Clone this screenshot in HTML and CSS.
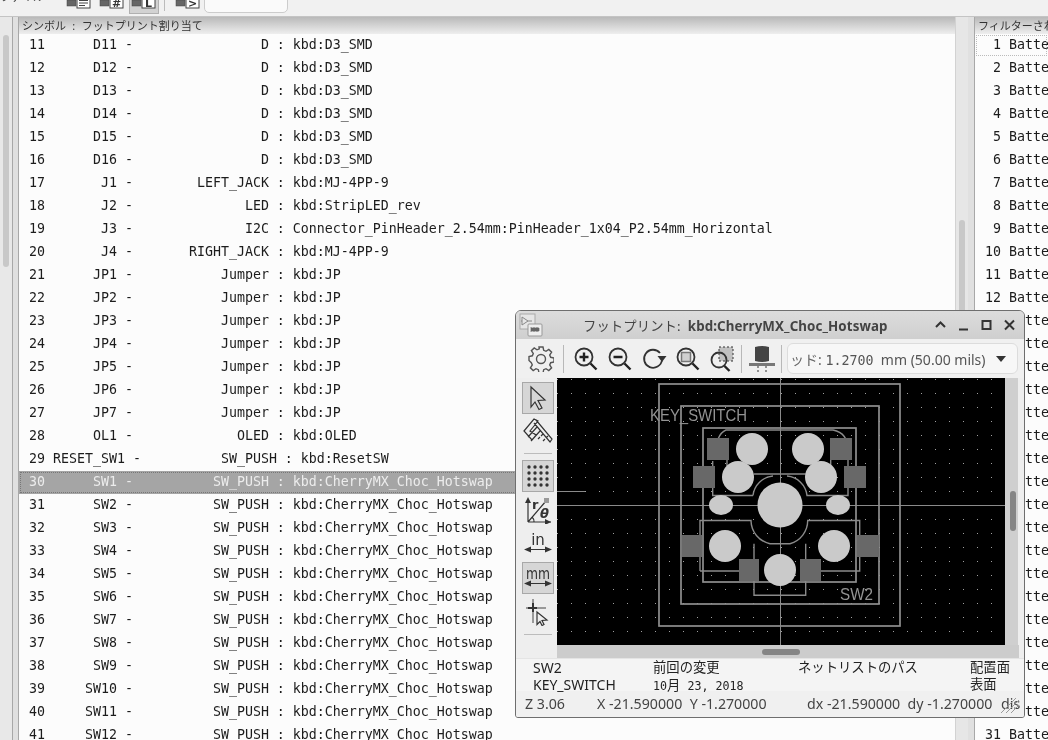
FILE: index.html
```html
<!DOCTYPE html>
<html lang="ja">
<head>
<meta charset="utf-8">
<title>フットプリント割り当て</title>
<link rel="stylesheet" href="styles.css">
</head>
<body>
<div class="app">
  <header class="topbar">
    <span class="toplabel">ファイル</span>
    <span class="topicon"><svg width="26" height="13" viewBox="0 0 26 13"><rect class="chip" x="2" y="3" width="9" height="6"/><rect class="box" x="12" y="1" width="13" height="10"/><path class="boxline" d="M14 3.500h9M14 6h9M14 8.500h6"/></svg></span>
    <span class="topicon"><svg width="26" height="13" viewBox="0 0 26 13"><rect class="chip" x="2" y="3" width="9" height="6"/><rect class="box" x="12" y="1" width="13" height="10"/><text class="boxtext" x="18.500" y="10">#</text></svg></span>
    <span class="topicon topicon-on"><svg width="26" height="13" viewBox="0 0 26 13"><rect class="chip" x="2" y="3" width="9" height="6"/><rect class="box" x="12" y="1" width="13" height="10"/><text class="boxtext" x="18.500" y="10">L</text></svg></span>
    <span class="topsep"></span>
    <span class="topicon"><svg width="26" height="13" viewBox="0 0 26 13"><rect class="chip" x="2" y="3" width="9" height="6"/><rect class="box" x="12" y="1" width="13" height="10"/><text class="boxtext" x="18.500" y="10">&gt;</text></svg></span>
    <span class="topcombo"></span>
  </header>
  <main class="panes">
    <aside class="leftpane"><div class="vthumb"></div></aside>
    <div class="divider"></div>
    <section class="listpane">
      <div class="panehead panehead-main">シンボル : フットプリント割り当て</div>
      <div class="rows">
        <div class="row"> 11      D11 -                D : kbd:D3_SMD</div>
        <div class="row"> 12      D12 -                D : kbd:D3_SMD</div>
        <div class="row"> 13      D13 -                D : kbd:D3_SMD</div>
        <div class="row"> 14      D14 -                D : kbd:D3_SMD</div>
        <div class="row"> 15      D15 -                D : kbd:D3_SMD</div>
        <div class="row"> 16      D16 -                D : kbd:D3_SMD</div>
        <div class="row"> 17       J1 -        LEFT_JACK : kbd:MJ-4PP-9</div>
        <div class="row"> 18       J2 -              LED : kbd:StripLED_rev</div>
        <div class="row"> 19       J3 -              I2C : Connector_PinHeader_2.54mm:PinHeader_1x04_P2.54mm_Horizontal</div>
        <div class="row"> 20       J4 -       RIGHT_JACK : kbd:MJ-4PP-9</div>
        <div class="row"> 21      JP1 -           Jumper : kbd:JP</div>
        <div class="row"> 22      JP2 -           Jumper : kbd:JP</div>
        <div class="row"> 23      JP3 -           Jumper : kbd:JP</div>
        <div class="row"> 24      JP4 -           Jumper : kbd:JP</div>
        <div class="row"> 25      JP5 -           Jumper : kbd:JP</div>
        <div class="row"> 26      JP6 -           Jumper : kbd:JP</div>
        <div class="row"> 27      JP7 -           Jumper : kbd:JP</div>
        <div class="row"> 28      OL1 -             OLED : kbd:OLED</div>
        <div class="row"> 29 RESET_SW1 -          SW_PUSH : kbd:ResetSW</div>
        <div class="row row-selected"> 30      SW1 -          SW_PUSH : kbd:CherryMX_Choc_Hotswap</div>
        <div class="row"> 31      SW2 -          SW_PUSH : kbd:CherryMX_Choc_Hotswap</div>
        <div class="row"> 32      SW3 -          SW_PUSH : kbd:CherryMX_Choc_Hotswap</div>
        <div class="row"> 33      SW4 -          SW_PUSH : kbd:CherryMX_Choc_Hotswap</div>
        <div class="row"> 34      SW5 -          SW_PUSH : kbd:CherryMX_Choc_Hotswap</div>
        <div class="row"> 35      SW6 -          SW_PUSH : kbd:CherryMX_Choc_Hotswap</div>
        <div class="row"> 36      SW7 -          SW_PUSH : kbd:CherryMX_Choc_Hotswap</div>
        <div class="row"> 37      SW8 -          SW_PUSH : kbd:CherryMX_Choc_Hotswap</div>
        <div class="row"> 38      SW9 -          SW_PUSH : kbd:CherryMX_Choc_Hotswap</div>
        <div class="row"> 39     SW10 -          SW_PUSH : kbd:CherryMX_Choc_Hotswap</div>
        <div class="row"> 40     SW11 -          SW_PUSH : kbd:CherryMX_Choc_Hotswap</div>
        <div class="row"> 41     SW12 -          SW_PUSH : kbd:CherryMX_Choc_Hotswap</div>
      </div>
    </section>
    <div class="vtrack"><div class="vthumb vthumb-main"></div></div>
    <div class="divider divider-right"></div>
    <section class="filterpane">
      <div class="panehead">フィルターされたフットプリント</div>
      <div class="rows">
        <div class="row row-focus">  1 Battery</div>
        <div class="row">  2 Battery</div>
        <div class="row">  3 Battery</div>
        <div class="row">  4 Battery</div>
        <div class="row">  5 Battery</div>
        <div class="row">  6 Battery</div>
        <div class="row">  7 Battery</div>
        <div class="row">  8 Battery</div>
        <div class="row">  9 Battery</div>
        <div class="row"> 10 Battery</div>
        <div class="row"> 11 Battery</div>
        <div class="row"> 12 Battery</div>
        <div class="row"> 13 Battery</div>
        <div class="row"> 14 Battery</div>
        <div class="row"> 15 Battery</div>
        <div class="row"> 16 Battery</div>
        <div class="row"> 17 Battery</div>
        <div class="row"> 18 Battery</div>
        <div class="row"> 19 Battery</div>
        <div class="row"> 20 Battery</div>
        <div class="row"> 21 Battery</div>
        <div class="row"> 22 Battery</div>
        <div class="row"> 23 Battery</div>
        <div class="row"> 24 Battery</div>
        <div class="row"> 25 Battery</div>
        <div class="row"> 26 Battery</div>
        <div class="row"> 27 Battery</div>
        <div class="row"> 28 Battery</div>
        <div class="row"> 29 Battery</div>
        <div class="row"> 30 Battery</div>
        <div class="row"> 31 Battery</div>
      </div>
    </section>
  </main>

  <div class="window">
    <div class="titlebar">
      <svg class="appicon" width="24" height="24" viewBox="0 0 24 24"><rect class="ai-back" x="1" y="1" width="15" height="15"/><path class="ai-line" d="M3 4l6 4-6 4zM2 8h1M9 8h4"/><rect class="ai-front" x="9" y="11" width="14" height="12" rx="1"/><path class="ai-dark" d="M12 15h8v3h-8zM12 14v1M15 14v1M18 14v1M12 18v1M15 18v1M18 18v1"/></svg>
      <div class="wintitle">フットプリント:  <b>kbd:CherryMX_Choc_Hotswap</b></div>
      <div class="winbtns">
        <svg width="23" height="20" viewBox="0 0 23 20"><path class="wb" d="M7 12l4.500-4.500L16 12"/></svg>
        <svg width="23" height="20" viewBox="0 0 23 20"><path class="wb" d="M7 14.500h9"/></svg>
        <svg width="23" height="20" viewBox="0 0 23 20"><rect class="wb" x="7.500" y="6" width="8" height="8"/></svg>
        <svg width="23" height="20" viewBox="0 0 23 20"><path class="wb" d="M7 5.500l9 9M16 5.500l-9 9"/></svg>
      </div>
    </div>
    <div class="wintools">
      <span class="tool"><svg width="26" height="26" viewBox="0 0 26 26"><path class="ic-thin" d="M11 1.500h4l.7 3.300 2.300 1 2.800-1.900 2.800 2.800-1.900 2.800 1 2.300 3.300.7v4l-3.300.7-1 2.300 1.900 2.800-2.800 2.800-2.800-1.900-2.300 1-.7 3.300h-4l-.7-3.300-2.300-1-2.800 1.900-2.800-2.800 1.900-2.800-1-2.300L1 15v-4l3.300-.7 1-2.300L3.400 5.200l2.800-2.800L9 4.300l2.300-1z" transform="translate(0 -.5)"/><circle class="ic-thin" cx="13" cy="13" r="4.500"/></svg></span>
      <span class="sep"></span>
      <span class="tool"><svg width="26" height="26" viewBox="0 0 26 26"><circle class="ic" cx="11" cy="11" r="8.500"/><path class="ic-bold" d="M17.500 17.500l6 6M6.500 11h9M11 6.500v9"/></svg></span>
      <span class="tool"><svg width="26" height="26" viewBox="0 0 26 26"><circle class="ic" cx="11" cy="11" r="8.500"/><path class="ic-bold" d="M17.500 17.500l6 6M6.500 11h9"/></svg></span>
      <span class="tool"><svg width="26" height="26" viewBox="0 0 26 26"><path class="ic" d="M19 7A9 9 0 1 0 21 14"/><path class="ic-fill" d="M16.500 10h9l-4.500 6z"/></svg></span>
      <span class="tool"><svg width="26" height="26" viewBox="0 0 26 26"><circle class="ic" cx="11" cy="11" r="8.500"/><rect class="ic-frame" x="6.500" y="6.500" width="9" height="9"/><path class="ic-bold" d="M17.500 17.500l6 6"/></svg></span>
      <span class="tool"><svg width="26" height="26" viewBox="0 0 26 26"><rect class="ic-sel" x="10" y="1" width="14" height="14"/><circle class="ic" cx="10" cy="14" r="7.500"/><path class="ic-bold" d="M15.500 20l5 5"/></svg></span>
      <span class="sep sep-tight"></span>
      <span class="tool"><svg width="30" height="30" viewBox="0 0 30 30"><path class="ic-3d" d="M8 3q7-2 14 0v14q-7 2-14 0z"/><rect class="ic-3db" x="2" y="19" width="26" height="3"/><path class="ic-dash" d="M11 22v7M19 22v7"/></svg></span>
      <span class="sep sep-tight"></span>
      <div class="combo"><span class="combotext"><span class="clipkana">ッド:</span> <span class="mono">1.2700</span>  mm (50.00 mils)</span><span class="caret"></span></div>
    </div>
    <div class="winbody">
      <nav class="sidetools">
        <span class="side side-on"><svg width="24" height="26" viewBox="0 0 24 26"><path class="ic-sm" d="M5 2l14 13-7 .5 4 7.500-3 1.500-4-7.500-4 5z"/></svg></span>
        <span class="side"><svg width="30" height="28" viewBox="0 0 30 28"><path class="ic-sm" d="M1 14L11 2l4 2-8 10 6 4-4 5zM13 3l16 19-2 3L11 6M5 20l9-10M8 24l9-10M17 20l-2 2M20 17l-2 2M22 22l-2 2M25 19l-2 2"/></svg></span>
        <span class="sidesep"></span>
        <span class="side side-on"><svg width="24" height="24" viewBox="0 0 24 24"><path class="ic-dots" d="M3 3h.01M9 3h.01M15 3h.01M21 3h.01M3 9h.01M9 9h.01M15 9h.01M21 9h.01M3 15h.01M9 15h.01M15 15h.01M21 15h.01M3 21h.01M9 21h.01M15 21h.01M21 21h.01"/></svg></span>
        <span class="side side-polar"><svg width="28" height="28" viewBox="0 0 28 28"><path class="ic-sm" d="M4 26V4M4 26h23M4 26L22 5"/><path class="ic-fill" d="M4 1l3 6H1zM27 26l-6-3v6z"/><rect class="ic-gray" x="20" y="2" width="5" height="5"/><text class="polar-r" x="8" y="13">r</text><text class="polar-t" x="16" y="22">θ</text><path class="ic-sm" d="M10 26a6 6 0 0 0-2-5"/></svg></span>
        <span class="side"><svg width="28" height="26" viewBox="0 0 28 26"><text class="unit" x="14" y="15">in</text><path class="ic-sm" d="M2 19.500h24"/><path class="ic-fill" d="M0 19.500l7-3v6zM28 19.500l-7-3v6z"/></svg></span>
        <span class="side side-on side-mm"><svg width="28" height="26" viewBox="0 0 28 26"><text class="unit" x="14" y="14" textLength="24" lengthAdjust="spacingAndGlyphs">mm</text><path class="ic-sm" d="M2 18.500h24"/><path class="ic-fill" d="M0 18.500l7-3v6zM28 18.500l-7-3v6z"/></svg></span>
        <span class="side"><svg width="28" height="28" viewBox="0 0 28 28"><path class="ic-gray-l" d="M2 10h20M9 1v24"/><path class="ic-cross" d="M4 10h9M9 5v9"/><path class="ic-sm" d="M13 14l10 8-5 .5 2 4-2 1-2-4-3 3z"/></svg></span>
        <span class="sidesep sidesep-end"></span>
      </nav>
      <div class="viewcol">
        <div class="viewrow">
          <svg class="canvas" width="448" height="267" viewBox="557 377 448 267">
            <defs>
              <pattern id="griddots" x="571" y="378" width="14" height="14" patternUnits="userSpaceOnUse"><rect class="griddot" width="1" height="1"/></pattern>
            </defs>
            <rect x="557" y="377" width="448" height="267" class="bg"/>
            <rect x="557" y="377" width="448" height="267" fill="url(#griddots)"/>
            <path class="axis" d="M780.500 377V644M557 504.500H1005M557 490.500H585"/>
            <rect class="court" x="659" y="383" width="241" height="242"/>
            <rect class="court" x="681" y="405" width="198" height="198"/>
            <rect class="court" x="703" y="427" width="153" height="154"/>
            <g class="silk">
              <path d="M718 438Q721 431 726 429H833Q848 432 848 449V494.500H807A22 22 0 0 0 787 475M805.700 473H754M753 494.500A22 22 0 0 1 773 475M753 494.500H712.700V486M727 459V465M830.700 459V465M712.700 460V465"/>
              <path d="M700 570V519.500H751A24 24 0 0 0 770 542.700H790A24 24 0 0 0 807.700 519.500H859.700V570H821M739 570H700M754 542.700V594.300H805.700V542.700M805 581Q810 572 820 570"/>
            </g>
            <g class="pads">
              <rect x="707" y="437" width="22" height="22"/><rect x="830" y="437" width="22" height="22"/>
              <rect x="693" y="465" width="22" height="22"/><rect x="844" y="465" width="22" height="22"/>
              <rect x="682" y="534" width="20" height="22"/><rect x="857" y="534" width="22" height="22"/>
              <rect x="739" y="558" width="20" height="22"/><rect x="800" y="558" width="21" height="22"/>
            </g>
            <g class="holes">
              <circle cx="752" cy="448" r="16"/><circle cx="808" cy="448" r="16"/>
              <circle cx="738" cy="476" r="16"/><circle cx="821" cy="476" r="16"/>
              <circle cx="780" cy="504" r="22.500"/>
              <ellipse cx="721" cy="504" rx="12" ry="10"/><ellipse cx="838" cy="504" rx="12" ry="10"/>
              <circle cx="725" cy="545" r="16"/><circle cx="834" cy="545" r="16"/>
              <circle cx="780" cy="569" r="16"/>
            </g>
            <text class="fptext" x="650" y="420" textLength="97" lengthAdjust="spacingAndGlyphs">KEY_SWITCH</text>
            <text class="fptext" x="840" y="599" textLength="33" lengthAdjust="spacingAndGlyphs">SW2</text>
          </svg>
          <div class="scroll-v"><div class="scroll-v-thumb"></div></div>
        </div>
        <div class="scroll-h"><div class="scroll-h-thumb"></div></div>
      </div>
    </div>
    <div class="infopanel">
      <div class="infocol infocol-a"><div>SW2</div><div>KEY_SWITCH</div></div>
      <div class="infocol infocol-b"><div>前回の変更</div><div class="date">10<span class="datekana">月</span> 23, 2018</div></div>
      <div class="infocol infocol-c"><div>ネットリストのパス</div></div>
      <div class="infocol infocol-d"><div>配置面</div><div>表面</div></div>
    </div>
    <footer class="status">
      <span class="st-z">Z 3.06</span>
      <span class="st-xy">X -21.590000  Y -1.270000</span>
      <span class="st-d">dx -21.590000  dy -1.270000</span>
      <span class="st-u">dis</span>
      <svg class="grip" width="19" height="17" viewBox="0 0 19 17"><path class="gripline" d="M1 16L16 1M6 16L19 3M11 16L19 8"/></svg>
    </footer>
  </div>
</div>
</body>
</html>
```

FILE: styles.css
```css
* { box-sizing: border-box; }
html, body { margin: 0; padding: 0; }
body { background: #fbfbfb; font-family: "Noto Sans", "Noto Sans CJK JP", sans-serif; color: #222; overflow: hidden; }

.app { position: relative; width: 1048px; height: 740px; overflow: hidden; display: flex; flex-direction: column; filter: grayscale(1); }

/* top toolbar, cropped by the edge of the shot */
.topbar { height: 17px; flex: none; background: #f1f1f1; border-bottom: 1px solid #c4c4c4; display: flex; align-items: flex-end; overflow: hidden; position: relative; }
.toplabel { width: 65px; flex: none; font-size: 11px; line-height: 14px; height: 14px; margin-bottom: 12px; color: #444; }
.topicon { width: 26px; height: 16px; margin-right: 7px; flex: none; display: flex; align-items: flex-start; margin-top: -4px; position: relative; top: -3px; }
.topicon-on { background: #d2d2d2; outline: 1px solid #b0b0b0; width: 28px; margin-left: -1px; margin-right: 6px; }
.topsep { width: 1px; height: 11px; background: #bbb; margin: 0 9px 3px 0; flex: none; align-self: flex-start; }
.topcombo { width: 84px; height: 18px; margin: -5px 0 3px -3px; background: #fafafa; border: 1px solid #ccc; border-radius: 5px; flex: none; }
.chip { fill: #666; stroke: #444; stroke-width: .5; }
.box { fill: #fff; stroke: #444; stroke-width: 1; }
.boxline { stroke: #444; stroke-width: 1; fill: none; }
.boxtext { font: 700 11px "DejaVu Sans", sans-serif; fill: #333; text-anchor: middle; }

/* main panes */
.panes { flex: 1; display: flex; min-height: 0; }
.leftpane { width: 13px; flex: none; background: #e8e8e8; border-right: 1px solid #a8a8a8; padding: 18px 0 0 3px; }
.vthumb { width: 6px; height: 232px; background: #c8c8c8; border-radius: 3px; }
.divider { width: 6px; flex: none; background: #e0e0e0; border-right: 1px solid #a8a8a8; }
.divider-right { width: 7px; }
.listpane { width: 936px; flex: none; background: #fcfcfc; overflow: hidden; }
.filterpane { flex: 1; min-width: 0; background: #fcfcfc; overflow: hidden; }
.panehead { height: 17px; font-size: 11px; line-height: 17px; padding-left: 3px; white-space: pre; overflow: hidden; color: #333; background: linear-gradient(#b9b9b9, #eeeeee); }
.panehead-main { word-spacing: 3.500px; }
.rows { display: flex; flex-direction: column; }
.row { height: 23px; flex: none; line-height: 21px; font-family: "DejaVu Sans Mono", monospace; font-size: 13.290px; white-space: pre; padding-left: 2px; color: #1c1c1c; overflow: hidden; }
.row-selected { background: #a5a5a5; color: #ececec; outline: 1px dotted #777; outline-offset: -2px; }
.row-focus { outline: 1px dotted #bbb; outline-offset: -2px; }

.vtrack { width: 13px; flex: none; background: #e6e6e6; border-left: 1px solid #d2d2d2; padding: 203px 0 0 3px; }
.vthumb-main { height: 300px; }

/* floating footprint window */
.window { position: absolute; left: 515px; top: 310px; width: 510px; height: 408px; background: #eeeeee; border: 1px solid #6e6e6e; border-radius: 6px 6px 3px 3px; display: flex; flex-direction: column; overflow: hidden; }
.titlebar { height: 28px; flex: none; background: linear-gradient(#dcdcdc, #cfcfcf); display: flex; align-items: center; }
.appicon { margin-left: 3px; flex: none; }
.ai-back { fill: #e6e6e6; stroke: #aaa; }
.ai-line { fill: none; stroke: #888; }
.ai-front { fill: #eee; stroke: #999; }
.ai-dark { fill: #666; stroke: #666; stroke-width: .7; }
.wintitle { flex: 1; margin-left: 40px; font-size: 13.33px; color: #444; white-space: pre; letter-spacing: .1px; }
.wintitle b { font-weight: 700; }
.winbtns { display: flex; margin-right: 3px; }
.wb { fill: none; stroke: #333; stroke-width: 2; }

.wintools { height: 39px; flex: none; display: flex; align-items: center; padding-left: 8px; background: #f0f0f0; }
.tool { width: 34px; height: 34px; flex: none; display: flex; align-items: center; justify-content: center; }
.sep { width: 11px; height: 28px; flex: none; position: relative; }
.sep::before { content: ""; position: absolute; left: 5px; top: 0; width: 1px; height: 100%; background: #b8b8b8; }
.sep-tight { width: 6px; }
.sep-tight::before { left: 2px; }
.combo { margin-left: 2px; width: 231px; height: 31px; flex: none; background: #f7f7f7; border: 1px solid #dcdcdc; border-radius: 6px; display: flex; align-items: center; padding-left: 3px; position: relative; overflow: hidden; font-size: 14px; color: #555; white-space: pre; }
.combotext { flex: none; }
.clipkana { margin-left: -1px; color: #666; }
.mono { font-family: "DejaVu Sans Mono", monospace; font-size: 13.33px; }
.caret { position: absolute; right: 11px; top: 12px; border-left: 5px solid transparent; border-right: 5px solid transparent; border-top: 6px solid #333; }

.ic { fill: none; stroke: #333; stroke-width: 1.800; }
.ic-thin { fill: none; stroke: #555; stroke-width: 1.400; }
.ic-bold { fill: none; stroke: #222; stroke-width: 2.400; }
.ic-fill { fill: #333; }
.ic-frame { fill: #d0d0d0; stroke: #777; stroke-width: 1.500; }
.ic-sel { fill: #c0c0c0; stroke: #333; stroke-width: 1; stroke-dasharray: 2 2; }
.ic-3d { fill: #444; }
.ic-3db { fill: #777; }
.ic-dash { stroke: #333; stroke-width: 1; stroke-dasharray: 2 2; fill: none; }
.ic-sm { fill: none; stroke: #333; stroke-width: 1.200; }
.ic-dots { fill: none; stroke: #333; stroke-width: 3.400; stroke-linecap: round; }
.ic-gray { fill: #999; }
.ic-gray-l { fill: none; stroke: #999; stroke-width: 2; }
.ic-cross { fill: none; stroke: #333; stroke-width: 2; }
.polar-r { font: 700 13px "DejaVu Sans", sans-serif; fill: #333; }
.polar-t { font: italic 700 13px "DejaVu Sans", sans-serif; fill: #333; }
.unit { font: 15px "DejaVu Sans", sans-serif; fill: #333; text-anchor: middle; }

.winbody { height: 280px; flex: none; display: flex; }
.sidetools { width: 41px; flex: none; display: flex; flex-direction: column; align-items: center; padding: 4px 3px 0 5px; gap: 1px; background: #eeeeee; }
.side { width: 32px; height: 32px; flex: none; display: flex; align-items: center; justify-content: center; }
.side-on { background: #d6d6d6; border: 1px solid #a8a8a8; }
.side-polar { margin-top: 1px; }
.side-mm { margin-top: 2px; margin-bottom: 1px; }
.sidesep { width: 28px; height: 11px; flex: none; position: relative; }
.sidesep::before { content: ""; position: absolute; left: 0; top: 5px; width: 100%; height: 1px; background: #bcbcbc; }
.viewcol { flex: 1; display: flex; flex-direction: column; min-width: 0; padding-right: 5px; }
.viewrow { display: flex; height: 267px; flex: none; }
.canvas { display: block; flex: none; }
.bg { fill: #000; }
.griddot { fill: #a0a0a0; }
.axis { stroke: #8a8a8a; stroke-width: 1; fill: none; }
.court { fill: none; stroke: #8f8f8f; stroke-width: 1.700; }
.silk { fill: none; stroke: #8a8a8a; stroke-width: 1.400; }
.pads { fill: #686868; }
.holes { fill: #cacaca; }
.fptext { font-family: "Liberation Sans", sans-serif; font-size: 17px; fill: #939393; }
.scroll-v { width: 13px; flex: none; background: #cfcfcf; padding: 113px 0 0 5px; }
.scroll-v-thumb { width: 6px; height: 40px; background: #858585; border-radius: 3px; }
.scroll-h { height: 13px; flex: none; background: #cccccc; padding: 4px 0 0 205px; }
.scroll-h-thumb { width: 38px; height: 6px; background: #858585; border-radius: 3px; }

.infopanel { height: 33px; flex: none; display: flex; background: #f4f4f4; font-size: 13.33px; line-height: 17px; color: #222; padding-left: 17px; border-top: 1px solid #e4e4e4; white-space: pre; position: relative; z-index: 1; }
.infocol { flex: none; }
.infocol-a { width: 120px; font-size: 14px; }
.infocol-b { width: 145px; }
.infocol-c { width: 172px; }
.date { font-family: "DejaVu Sans Mono", monospace; font-size: 11.670px; }
.datekana { font-family: "Noto Sans CJK JP", sans-serif; font-size: 13.330px; }
.status { height: 28px; flex: none; display: flex; align-items: center; background: #f0f0f0; font-size: 14.200px; color: #444; white-space: pre; padding: 0 0 3px 9px; position: relative; }
.st-z { width: 72px; flex: none; }
.st-xy { width: 210px; flex: none; }
.st-d { width: 194px; flex: none; }
.st-u { flex: none; }
.grip { position: absolute; right: 5px; bottom: 5px; }
.gripline { fill: none; stroke: #999; stroke-width: 1; }
```
